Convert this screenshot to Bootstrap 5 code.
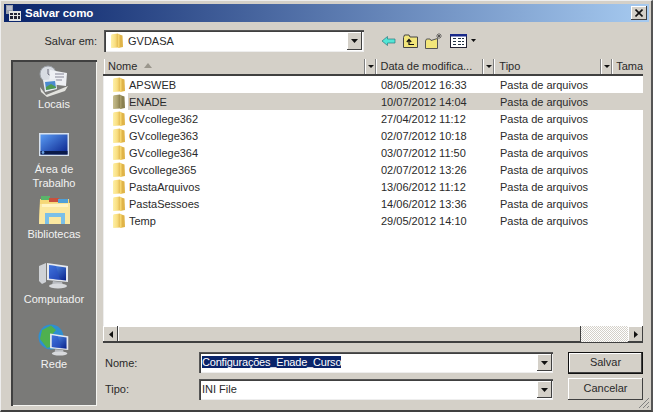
<!DOCTYPE html>
<html lang="pt-BR">
  <head>
    <meta charset="UTF-8" />
    <meta name="viewport" content="width=device-width, initial-scale=1.0" />
    <title>Salvar como</title>
    <link
      href="https://cdn.jsdelivr.net/npm/bootstrap@5.3.0/dist/css/bootstrap.min.css"
      rel="stylesheet"
    />
    <style>
      html, body {
        margin: 0;
        width: 653px;
        height: 412px;
        overflow: hidden;
        background: #d4d0c8;
      }
      .dlg {
        width: 653px;
        height: 412px;
        padding: 4px;
        background: #d4d0c8;
        color: #2a2a2a;
        font: 11px/14px "Liberation Sans", Arial, sans-serif;
        border-right: 2px solid #555;
        border-bottom: 2px solid #404040;
        border-top: 1px solid #eee;
        border-left: 1px solid #eee;
      }
      .ttl {
        height: 18px;
        margin-top: -1px;
        margin-left: -1px;
        margin-right: -2px;
        padding: 0 2px 0 1px;
        background: linear-gradient(90deg, #0a246a, #a6caf0);
        color: #fff;
        font-weight: 700;
        font-size: 11.5px;
      }
      .xbtn {
        width: 16px;
        height: 14px;
        background: #d4d0c8;
        box-shadow: inset -1px -1px #404040, inset 1px 1px #fff;
      }
      .toprow { height: 22px; margin: 8px 0 7px 0; }
      .toplabel { width: 92px; text-align: right; }
      .combo {
        background: #fff;
        box-shadow: inset 1px 1px #555, inset 2px 2px #404040, inset -1px -1px #eee;
        height: 22px;
        padding: 2px;
      }
      .combo-top { width: 260px; margin-left: 7px; }
      .cbtn {
        width: 15px;
        height: 18px;
        flex: none;
        margin-left: auto;
        background: #d4d0c8;
        box-shadow: inset -1px -1px #404040, inset 1px 1px #fff;
      }
      .tools { margin-left: 17px; gap: 7px; }
      .mainrow { height: 337px; }
      .side {
        width: 86px;
        margin: 1px 0 0 6px;
        background: #7a7a78;
        box-shadow: inset 2px 2px #404040, inset -1px -1px #f4f4f0;
        color: #f2f2f2;
        text-align: center;
        padding-top: 3px;
      }
      .place { height: 65px; }
      .placeicon { height: 34px; }
      .rightcol { width: 540px; margin-left: 6px; }
      .filelist {
        height: 284px;
        background: #fff;
        box-shadow: inset 0 1px #eee, inset 1px 0 #eee;
        overflow: hidden;
      }
      .cols {
        height: 17px;
        background: #d4d0c8;
        border-bottom: 2px solid #404040;
        box-sizing: border-box;
        padding-left: 1px;
      }
      .colh {
        height: 15px;
        padding-left: 4px;
        overflow: hidden;
        white-space: nowrap;
        border-right: 1px solid #808080;
        box-shadow: inset 1px 0 #fff;
      }
      .colw1 { width: 261px; }
      .colw2 { width: 108px; padding-left: 5px; }
      .colw3 { width: 107px; padding-left: 5px; }
      .colarrow {
        width: 11px;
        flex: none;
        height: 15px;
        border-right: 1px solid #808080;
        box-shadow: inset 1px 0 #fff;
        position: relative;
      }
      .colarrow::after {
        content: "";
        position: absolute;
        left: 3px;
        top: 6px;
        border: 3px solid transparent;
        border-top: 3px solid #111;
      }
      .rowf { height: 17px; white-space: nowrap; }
      .cname { width: 272px; padding-left: 9px; gap: 2px; flex: none; }
      .cnametxt { height: 17px; padding: 2px 0 1px 1px; }
      .cdate { width: 125px; padding-left: 6px; }
      .rowsel { background: #d4d0c8; }
      .listbody { height: 250px; }
      .hbar { height: 17px; background: #d4d0c8; box-shadow: inset 0 -1px #404040; }
      .sbtn {
        width: 15px;
        height: 16px;
        background: #d4d0c8;
        box-shadow: inset -1px -1px #404040, inset 1px 1px #fff;
      }
      .thumb {
        width: 463px;
        height: 16px;
        background: #d4d0c8;
        box-shadow: inset -1px -1px #404040, inset 1px 1px #fff;
      }
      .track {
        flex: 1;
        height: 16px;
        background-color: #eee;
        background-image: repeating-conic-gradient(#d4d0c8 0 25%, #fff 0 50%);
        background-size: 2px 2px;
      }
      .formgrid {
        margin-top: 9px;
        display: grid;
        grid-template-columns: 96px 354px 15px 75px;
        grid-template-rows: 22px 22px;
        row-gap: 4px;
      }
      .flabel { padding-left: 2px; line-height: 22px; }
      .combo-f { height: 21px; padding: 3px 15px 2px 3px; line-height: 15px; position: relative; }
      .combo-f .cbtn { position: absolute; right: 1px; top: 2px; height: 17px; }
      .combo-a { align-self: end; }
      .seltxt { background: #0a246a; color: #fff; letter-spacing: -0.2px; }
      .winbtn {
        grid-column: 4;
        background: #d4d0c8;
        box-shadow: inset -1px -1px #404040, inset 1px 1px #fff;
        text-align: center;
        line-height: 20px;
      }
      .winbtn-def { box-shadow: inset 0 0 0 1px #111, inset -2px -2px #404040, inset 2px 2px #fff; }
      .grip { position: absolute; right: 1px; bottom: 1px; }
      .dlgwrap { position: relative; }
    </style>
  </head>
  <body>
    <svg width="0" height="0" class="position-absolute">
      <defs>
        <linearGradient id="fgrad" x1="0" y1="0" x2="1" y2="0">
          <stop offset="0" stop-color="#fdf0a8" />
          <stop offset="0.6" stop-color="#f9de80" />
          <stop offset="1" stop-color="#e4bc54" />
        </linearGradient>
        <linearGradient id="fgrad2" x1="0" y1="0" x2="1" y2="0">
          <stop offset="0" stop-color="#c8bf90" />
          <stop offset="0.6" stop-color="#aca270" />
          <stop offset="1" stop-color="#8a7f50" />
        </linearGradient>
        <linearGradient id="scr" x1="0" y1="0" x2="1" y2="1">
          <stop offset="0" stop-color="#5a9cf4" />
          <stop offset="1" stop-color="#08208a" />
        </linearGradient>
        <symbol id="folder" viewBox="0 0 14 16">
          <path d="M1 2.5 Q1 1.5 2 1.3 L8 0.5 L8 14.5 L1.5 15 Q1 15 1 14 Z" fill="url(#fgrad)" />
          <path d="M8 1 L12.5 2.5 L13 14 L8 15 Z" fill="#e0b448" />
          <path d="M8 0.5 L9.5 2 L9.5 15 L8 15 Z" fill="#f6d670" />
        </symbol>
        <symbol id="folderg" viewBox="0 0 14 16">
          <path d="M1 2.5 Q1 1.5 2 1.3 L8 0.5 L8 14.5 L1.5 15 Q1 15 1 14 Z" fill="url(#fgrad2)" />
          <path d="M8 1 L12.5 2.5 L13 14 L8 15 Z" fill="#8a8050" />
          <path d="M8 0.5 L9.5 2 L9.5 15 L8 15 Z" fill="#a59a66" />
        </symbol>
        <symbol id="monitor" viewBox="0 0 30 30">
          <path d="M7 3 L28 6 L28 22 L7 20 Z" fill="#e6e9ee" />
          <path d="M9 5 L26 7.5 L26 20.5 L9 18.5 Z" fill="url(#scr)" />
          <path d="M9 5 L16 6 L20 20 L9 18.5 Z" fill="#2a50c8" fill-opacity=".55" />
          <path d="M13 21 L22 22 L23 25 L12 25 Z" fill="#b8bbc0" />
          <ellipse cx="18" cy="26" rx="9" ry="2.4" fill="#d8dadd" />
        </symbol>
      </defs>
    </svg>

    <div class="dlg dlgwrap d-flex flex-column">
      <div class="ttl d-flex align-items-center flex-shrink-0">
        <svg width="16" height="16" viewBox="0 0 16 16" class="me-1">
          <rect x="1" y="0" width="7" height="9" fill="#9aa0ac" />
          <path d="M2 2h5M2 4h5" stroke="#dde" />
          <rect x="4" y="6" width="12" height="10" fill="#e4e4e4" />
          <path d="M5 8h3v2H5zM9 8h3v2H9zM13 8h2v2h-2zM5 11h3v3H5zM9 11h3v3H9zM13 11h2v3h-2z" fill="#223" />
        </svg>
        <span>Salvar como</span>
        <div class="xbtn ms-auto d-flex align-items-center justify-content-center">
          <svg width="8" height="8" viewBox="0 0 8 8"><path d="M0.5 0.5 L7.5 7.5 M7.5 0.5 L0.5 7.5" stroke="#111" stroke-width="1.6" /></svg>
        </div>
      </div>

      <div class="toprow d-flex align-items-center flex-shrink-0">
        <div class="toplabel">Salvar em:</div>
        <div class="combo combo-top d-flex align-items-center">
          <svg width="14" height="16" class="ms-1 me-1"><use href="#folder" /></svg>
          <span>GVDASA</span>
          <div class="cbtn d-flex align-items-center justify-content-center">
            <svg width="7" height="4"><path d="M0 0h7L3.5 4z" fill="#111" /></svg>
          </div>
        </div>
        <div class="tools d-flex align-items-center">
          <svg width="15" height="12" viewBox="0 0 15 12">
            <path d="M1 6 L6.5 1.5 L6.5 4 L14 4 L14 8 L6.5 8 L6.5 10.5 Z" fill="#52e6d6" stroke="#2a7a80" stroke-width="0.7" />
          </svg>
          <svg width="15" height="14" viewBox="0 0 15 14">
            <path d="M0.5 3.5 L1.5 1 L6 1 L7 3 L14.5 3 L14.5 13.5 L0.5 13.5 Z" fill="#f2e67a" stroke="#444" />
            <path d="M6 11 V6 M3.8 8 L6 5.5 L8.2 8 M6 10.5 H11" fill="none" stroke="#111" stroke-width="1.2" />
          </svg>
          <svg width="18" height="16" viewBox="0 0 18 16">
            <path d="M0.5 8 L1.5 6 L5 6 L6 7.5 L12.5 5.5 L12.5 15.5 L0.5 15.5 Z" fill="#f2e67a" stroke="#555" />
            <path d="M14 0 V6 M11 3 H17 M12 1 L16 5 M16 1 L12 5" stroke="#444" stroke-width="0.7" />
          </svg>
          <div class="d-flex align-items-center">
            <svg width="17" height="14" viewBox="0 0 17 14">
              <rect x="0.5" y="0.5" width="16" height="13" fill="#fff" stroke="#223" />
              <rect x="0" y="0" width="17" height="2.5" fill="#1a2a8a" />
              <path d="M3 4h3v1H3zM8 4h3v1H8zM12 4h2v1h-2zM3 7h3v1H3zM8 7h3v1H8zM12 7h2v1h-2zM3 10h3v1H3zM8 10h3v1H8zM12 10h2v1h-2z" fill="#234" />
            </svg>
            <svg width="6" height="4" class="ms-1"><path d="M0 0h5L2.5 3z" fill="#111" /></svg>
          </div>
        </div>
      </div>

      <div class="mainrow d-flex flex-grow-1">
        <div class="side flex-shrink-0">
          <div class="place">
            <div class="placeicon d-flex justify-content-center align-items-end">
              <svg width="34" height="32" viewBox="0 0 34 32">
                <circle cx="11" cy="9" r="8" fill="#d7dbe2" stroke="#9a9fa6" />
                <path d="M11 4 V9 L14 11" stroke="#667" fill="none" />
                <path d="M13 5 L30 8 L29 21 L12 19 Z" fill="#eef0f4" />
                <path d="M18 9h9M18 12h9M18 15h7" stroke="#889" />
                <path d="M6 15 L19 14 L20 24 L8 27 Z" fill="#e8ecf0" />
                <path d="M8 17 L18 16 L19 23 L9 25 Z" fill="#4a8ad0" />
                <path d="M9 22 L14 19 L19 22 L19 23 L9 25 Z" fill="#4f9a50" />
                <path d="M3 22 L9 30 L31 21 L28 26 L10 32 L4 27 Z" fill="#e2e2de" />
              </svg>
            </div>
            <div>Locais</div>
          </div>
          <div class="place">
            <div class="placeicon d-flex justify-content-center align-items-center">
              <svg width="32" height="26" viewBox="0 0 32 26">
                <rect x="1" y="1" width="30" height="23" fill="#d8e2ee" />
                <rect x="2.5" y="2.5" width="27" height="20" fill="url(#scr)" />
                <rect x="2.5" y="19" width="27" height="3.5" fill="#0a1a4a" />
                <circle cx="5" cy="20.5" r="1.4" fill="#6aa0e0" />
              </svg>
            </div>
            <div>Área de<br />Trabalho</div>
          </div>
          <div class="place">
            <div class="placeicon d-flex justify-content-center align-items-center">
              <svg width="33" height="30" viewBox="0 0 33 30">
                <path d="M2 4 L31 4 L32 29 L1 29 Z" fill="#f5d878" />
                <path d="M3 1 H12 V5 H3 Z" fill="#5ab46a" />
                <path d="M11 3 H21 V7 H11 Z" fill="#c8503c" />
                <path d="M20 4 H30 V8 H20 Z" fill="#4fa0d8" />
                <path d="M2 9 L32 8 L32 29 L1 29 Z" fill="#fbe8a0" />
                <path d="M4 9 H30 V12 H4 Z" fill="#fff4c4" />
                <path d="M7 29 V18 L27 18 V29 H23 V22 H11 V29 Z" fill="#7ac0e8" />
              </svg>
            </div>
            <div>Bibliotecas</div>
          </div>
          <div class="place">
            <div class="placeicon d-flex justify-content-center align-items-center">
              <svg width="32" height="30" viewBox="0 0 32 30">
                <path d="M1 6 L8 3 L8 22 L4 24 L1 21 Z" fill="#cfd2d6" />
                <use href="#monitor" x="2" y="0" width="30" height="30" />
              </svg>
            </div>
            <div>Computador</div>
          </div>
          <div class="place">
            <div class="placeicon d-flex justify-content-center align-items-center">
              <svg width="32" height="32" viewBox="0 0 32 32">
                <circle cx="13" cy="13" r="12.5" fill="#2f8fd0" />
                <path d="M4 6 L13 1.5 L18 6 L12 13 L15 22 L9 24 L2 15 Z" fill="#4fb04f" />
                <use href="#monitor" x="6" y="7" width="26" height="26" />
              </svg>
            </div>
            <div>Rede</div>
          </div>
        </div>

        <div class="rightcol d-flex flex-column">
          <div class="filelist">
            <div class="cols d-flex">
              <div class="colh colw1">Nome <svg width="10" height="5" class="ms-1 mb-1"><path d="M0 5 L4 0 L8 5 Z" fill="#9a968c" /></svg></div>
              <div class="colarrow"></div>
              <div class="colh colw2">Data de modifica...</div>
              <div class="colarrow"></div>
              <div class="colh colw3">Tipo</div>
              <div class="colarrow"></div>
              <div class="colh border-0 flex-grow-1">Tama</div>
            </div>
            <div id="rows" class="listbody"></div>
            <div class="hbar d-flex">
              <div class="sbtn d-flex align-items-center justify-content-center">
                <svg width="4" height="7"><path d="M4 0v7L0 3.5z" fill="#111" /></svg>
              </div>
              <div class="thumb"></div>
              <div class="track"></div>
              <div class="sbtn d-flex align-items-center justify-content-center">
                <svg width="4" height="7"><path d="M0 0v7L4 3.5z" fill="#111" /></svg>
              </div>
            </div>
          </div>

          <div class="formgrid">
            <div class="flabel">Nome:</div>
            <div class="combo combo-f">
              <span class="seltxt">Configurações_Enade_Curso</span>
              <div class="cbtn d-flex align-items-center justify-content-center">
                <svg width="7" height="4"><path d="M0 0h7L3.5 4z" fill="#111" /></svg>
              </div>
            </div>
            <div class="winbtn winbtn-def">Salvar</div>
            <div class="flabel">Tipo:</div>
            <div class="combo combo-f combo-a">
              <span>INI File</span>
              <div class="cbtn d-flex align-items-center justify-content-center">
                <svg width="7" height="4"><path d="M0 0h7L3.5 4z" fill="#111" /></svg>
              </div>
            </div>
            <div class="winbtn">Cancelar</div>
          </div>
        </div>
      </div>

      <svg class="grip" width="12" height="12" viewBox="0 0 12 12">
        <path d="M11 1 L1 11 M11 5 L5 11 M11 9 L9 11" stroke="#808080" />
      </svg>
    </div>

    <script>
      const files = [
        ["APSWEB", "08/05/2012 16:33"],
        ["ENADE", "10/07/2012 14:04"],
        ["GVcollege362", "27/04/2012 11:12"],
        ["GVcollege363", "02/07/2012 10:18"],
        ["GVcollege364", "03/07/2012 11:50"],
        ["Gvcollege365", "02/07/2012 13:26"],
        ["PastaArquivos", "13/06/2012 11:12"],
        ["PastaSessoes", "14/06/2012 13:36"],
        ["Temp", "29/05/2012 14:10"],
      ];

      const rows = document.getElementById("rows");
      files.forEach(([name, date]) => {
        const hot = name === "ENADE";
        rows.innerHTML += `
        <div class="rowf d-flex">
          <div class="cname d-flex align-items-center">
            <svg width="14" height="16" class="flex-shrink-0"><use href="#${hot ? "folderg" : "folder"}" /></svg>
            <div class="cnametxt flex-grow-1 ${hot ? "rowsel" : ""}">${name}</div>
          </div>
          <div class="d-flex flex-grow-1 align-items-center ${hot ? "rowsel" : ""}">
            <div class="cdate">${date}</div>
            <div>Pasta de arquivos</div>
          </div>
        </div>`;
      });
    </script>
  </body>
</html>
